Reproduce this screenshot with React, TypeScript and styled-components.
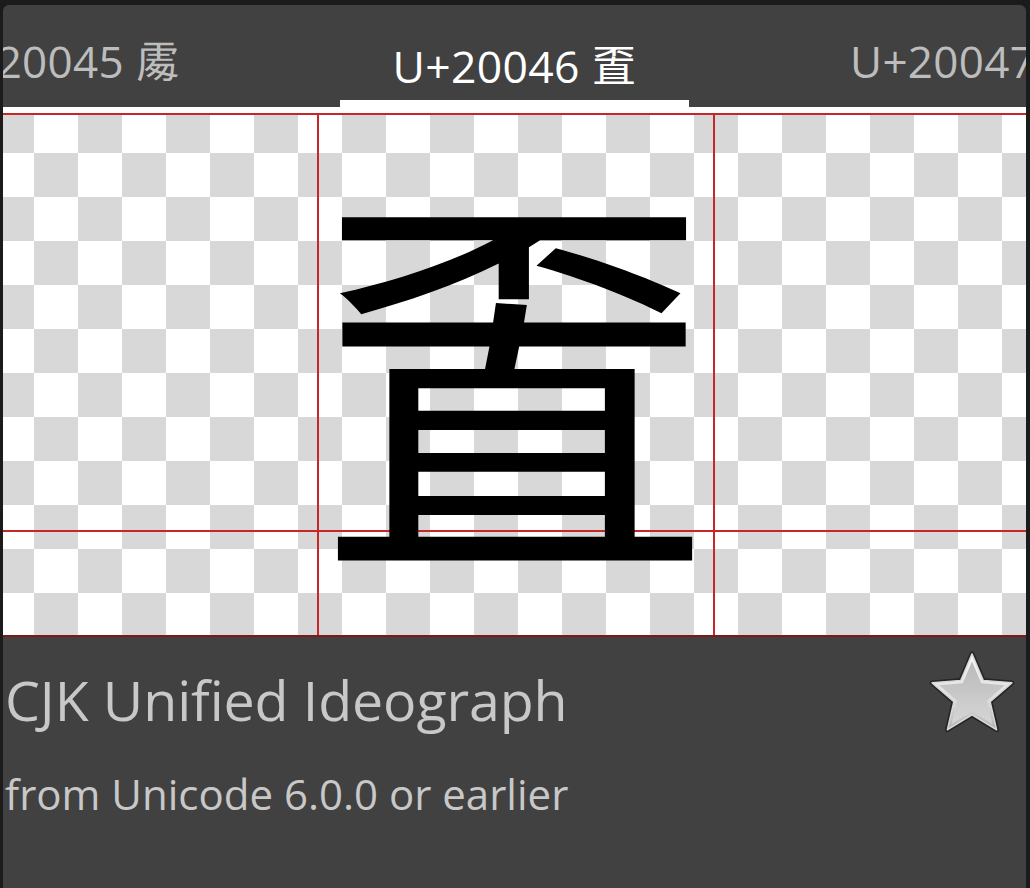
import React from 'react'
import styled, { createGlobalStyle } from 'styled-components'

const GlobalStyle = createGlobalStyle`
    html, body {
        margin: 0;
        padding: 0;
        background: #1b1b1b;
        height: 100%;
        overflow: hidden;
    }
    #root {
        height: 100%;
    }
`

const UI_FONT = `"Open Sans", "Noto Sans", "Noto Sans CJK SC", "Noto Sans CJK TC", sans-serif`
const GLYPH_FONT = `"Noto Sans CJK TC", "Noto Sans CJK SC", "Noto Sans CJK JP", sans-serif`

interface CodePoint {
    code: string
    char: string
}

const pages: CodePoint[] = [
    { code: 'U+20045', char: '\u{20045}' },
    { code: 'U+20046', char: '\u{20046}' },
    { code: 'U+20047', char: '\u{20047}' },
]

const STAR = 'M46 4 L57.76 31.82 L87.85 34.4 L65.02 54.18 L71.86 83.6 L46 68 L20.14 83.6 L26.98 54.18 L4.15 34.4 L34.24 31.82 Z'

const Star = () => (
    <svg width='88' height='84' viewBox='0 0 92 88'>
        <defs>
            <linearGradient id='starRim' x1='0' y1='0' x2='0' y2='1'>
                <stop offset='0' stopColor='#f6f6f6' />
                <stop offset='0.6' stopColor='#dedede' />
                <stop offset='1' stopColor='#b4b4b4' />
            </linearGradient>
            <linearGradient id='starFace' x1='0' y1='0' x2='0' y2='1'>
                <stop offset='0' stopColor='#b9b9b9' />
                <stop offset='1' stopColor='#d6d6d6' />
            </linearGradient>
        </defs>
        <path d={STAR} fill='none' stroke='#1a1a1a' strokeOpacity='0.7' strokeWidth='5' strokeLinejoin='round' />
        <path d={STAR} fill='url(#starRim)' stroke='#d8d8d8' strokeWidth='1.5' strokeLinejoin='round' />
        <path d={STAR} fill='url(#starFace)' transform='translate(46 48) scale(0.82) translate(-46 -48)' />
    </svg>
)

export default function App() {
    const [prev, current, next] = pages

    return (
        <>
            <GlobalStyle />
            <Screen>
                <Card>
                    <TitleStrip>
                        <SideTitle side='left'>{prev.code} {prev.char}</SideTitle>
                        <CenterTab>
                            <CenterTitle>{current.code} {current.char}</CenterTitle>
                        </CenterTab>
                        <SideTitle side='right'>{next.code} {next.char}</SideTitle>
                    </TitleStrip>
                    <Canvas>
                        <GuideH style={{ top: 0 }} />
                        <GuideH style={{ top: 417 }} />
                        <GuideV style={{ left: 314 }} />
                        <GuideV style={{ left: 710 }} />
                        <GlyphCell>{current.char}</GlyphCell>
                    </Canvas>
                    <Info>
                        <InfoRow>
                            <BlockName>CJK Unified Ideograph</BlockName>
                            <StarButton aria-label='favourite'>
                                <Star />
                            </StarButton>
                        </InfoRow>
                        <Since>from Unicode 6.0.0 or earlier</Since>
                    </Info>
                </Card>
            </Screen>
        </>
    )
}

const Screen = styled.div`
    display: flex;
    height: 100%;
    padding: 5px 4px 0 3px;
    box-sizing: border-box;
`

const Card = styled.div`
    flex: 1;
    display: flex;
    flex-direction: column;
    background: #414141;
    border-radius: 6px 6px 0 0;
    overflow: hidden;
    font-family: ${UI_FONT};
`

const TitleStrip = styled.div`
    display: flex;
    align-items: stretch;
    height: 102px;
    flex-shrink: 0;
    white-space: nowrap;
`

const SideTitle = styled.div<{ side: 'left' | 'right' }>`
    display: flex;
    align-items: flex-start;
    justify-content: ${props => props.side === 'left' ? 'flex-end' : 'flex-start'};
    flex: ${props => props.side === 'left' ? '0 0 337px' : '1'};
    min-width: 0;
    box-sizing: border-box;
    padding-top: 26px;
    padding-right: ${props => props.side === 'left' ? '160px' : '0'};
    padding-left: ${props => props.side === 'right' ? '161px' : '0'};
    color: #bdbdbd;
    font-size: 44px;
    letter-spacing: 0.3px;
`

const CenterTab = styled.div`
    flex: 0 0 349px;
    display: flex;
    justify-content: center;
    align-items: flex-start;
    padding-top: 26px;
    box-sizing: border-box;
    border-bottom: 7px solid #ffffff;
`

const CenterTitle = styled.span`
    color: #ffffff;
    font-size: 44.5px;
    letter-spacing: 0.3px;
`

const Canvas = styled.div`
    position: relative;
    flex: 0 0 530px;
    display: grid;
    grid-template-columns: 314px 396px 1fr;
    box-sizing: border-box;
    border-top: 6px solid #ffffff;
    border-bottom: 2px solid #7a1a1a;
    background-color: #ffffff;
    background-image: conic-gradient(#ffffff 25%, #d8d8d8 0 50%, #ffffff 0 75%, #d8d8d8 0);
    background-size: 88px 88px;
    background-position: -13px -4px;
    overflow: hidden;
`

const GuideH = styled.div`
    position: absolute;
    left: 0;
    right: 0;
    height: 2px;
    background: #c62828;
`

const GuideV = styled.div`
    position: absolute;
    top: 0;
    bottom: 0;
    width: 2px;
    background: #c62828;
`

const GlyphCell = styled.div`
    position: relative;
    grid-column: 2;
    margin: 0 -9px 0 -11px;
    font-family: ${GLYPH_FONT};
    font-size: 402px;
    line-height: 402px;
    padding-top: 49px;
    color: #000000;
    text-align: center;
    transform: scaleY(1.04);
    transform-origin: 50% 104px;
`

const Info = styled.div`
    flex: 1;
    padding: 12px 10px 0 2px;
    color: #c8c8c8;
`

const InfoRow = styled.div`
    display: flex;
    justify-content: space-between;
    align-items: flex-start;
`

const BlockName = styled.div`
    font-size: 55.5px;
    line-height: 102px;
    letter-spacing: -0.1px;
`

const StarButton = styled.div`
    display: flex;
    padding-top: 1px;
`

const Since = styled.div`
    font-size: 42px;
    line-height: 85px;
`
